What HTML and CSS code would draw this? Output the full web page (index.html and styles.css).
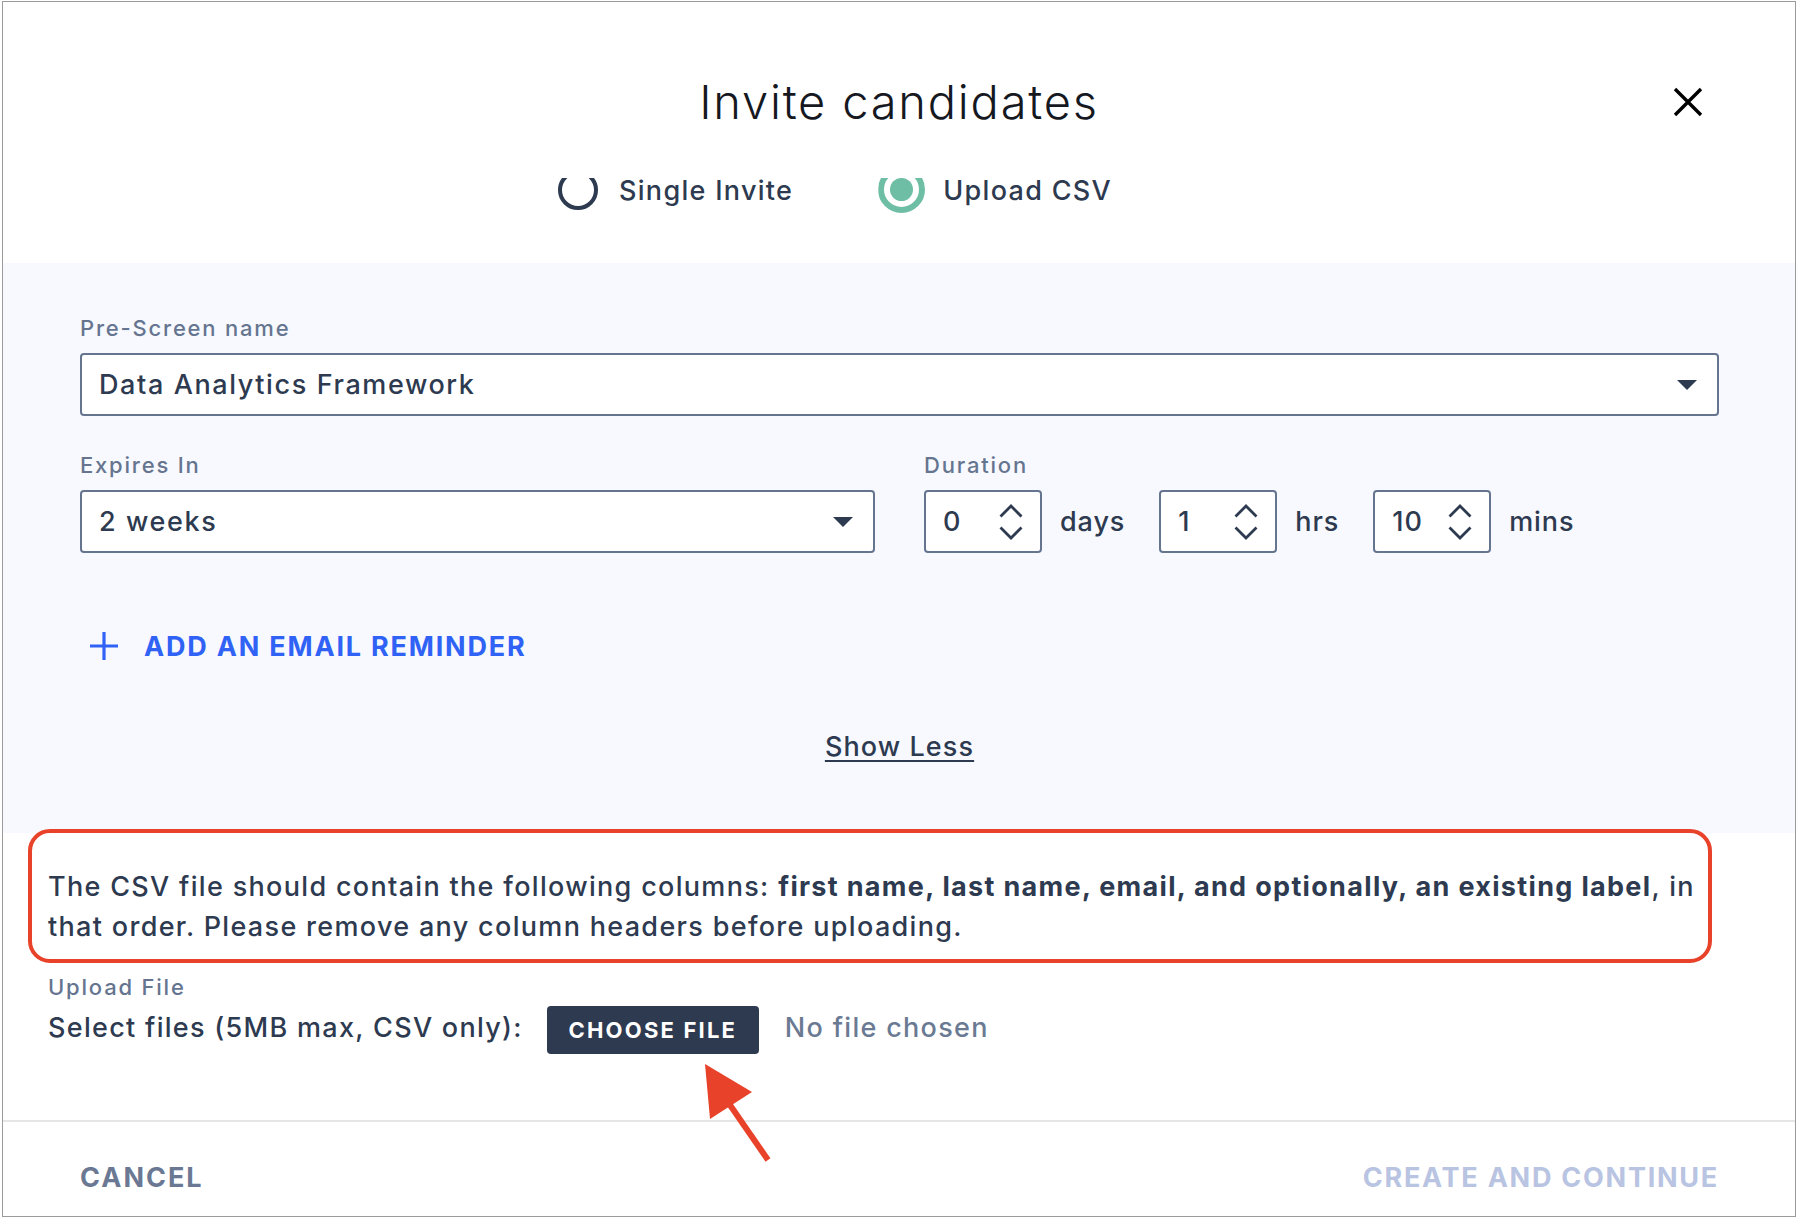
FILE: index.html
```html
<!DOCTYPE html>
<html lang="en">
<head>
<meta charset="utf-8">
<title>Invite candidates</title>
<link rel="stylesheet" href="styles.css">
</head>
<body>
<div class="dialog">
  <header class="head">
    <div class="title-row">
      <h1 class="title">Invite candidates</h1>
      <button class="close" aria-label="Close">
        <svg width="30" height="30" viewBox="0 0 30 30"><path d="M2 2 L28 28 M28 2 L2 28" stroke="#000" stroke-width="3.4" fill="none"/></svg>
      </button>
    </div>
    <div class="modes">
      <label class="radio">
        <span class="ring"></span>
        <span class="radio-text">Single Invite</span>
      </label>
      <label class="radio radio-on">
        <span class="ring ring-on"><span class="dot"></span></span>
        <span class="radio-text">Upload CSV</span>
      </label>
    </div>
  </header>

  <section class="panel">
    <div class="field">
      <div class="label">Pre-Screen name</div>
      <div class="select">
        <span>Data Analytics Framework</span>
        <svg class="caret" width="20" height="10" viewBox="0 0 20 10"><path d="M0 0 H20 L10 10 Z" fill="#2d3a50"/></svg>
      </div>
    </div>

    <div class="row2">
      <div class="field expires">
        <div class="label">Expires In</div>
        <div class="select">
          <span>2 weeks</span>
          <svg class="caret" width="20" height="10" viewBox="0 0 20 10"><path d="M0 0 H20 L10 10 Z" fill="#2d3a50"/></svg>
        </div>
      </div>
      <div class="field duration">
        <div class="label">Duration</div>
        <div class="dur-inputs">
          <div class="num"><span>0</span>
            <svg class="spin" width="24" height="36" viewBox="0 0 24 36"><path d="M1.5 12.5 L12 2 L22.5 12.5 M1.5 23.5 L12 34 L22.5 23.5" stroke="#2d3a50" stroke-width="2.8" fill="none"/></svg>
          </div>
          <span class="unit">days</span>
          <div class="num"><span>1</span>
            <svg class="spin" width="24" height="36" viewBox="0 0 24 36"><path d="M1.5 12.5 L12 2 L22.5 12.5 M1.5 23.5 L12 34 L22.5 23.5" stroke="#2d3a50" stroke-width="2.8" fill="none"/></svg>
          </div>
          <span class="unit">hrs</span>
          <div class="num"><span>10</span>
            <svg class="spin" width="24" height="36" viewBox="0 0 24 36"><path d="M1.5 12.5 L12 2 L22.5 12.5 M1.5 23.5 L12 34 L22.5 23.5" stroke="#2d3a50" stroke-width="2.8" fill="none"/></svg>
          </div>
          <span class="unit">mins</span>
        </div>
      </div>
    </div>

    <div class="add-reminder">
      <svg width="28" height="28" viewBox="0 0 28 28"><path d="M14 0 V28 M0 14 H28" stroke="#2f62f5" stroke-width="3.2" fill="none"/></svg>
      <span>ADD AN EMAIL REMINDER</span>
    </div>

    <div class="show-less"><a href="#">Show Less</a></div>
  </section>

  <section class="upload">
    <p class="note">The CSV file should contain the following columns: <b>first name, last name, email, and optionally, an existing label</b>, in that order. Please remove any column headers before uploading.</p>
    <div class="label upload-label">Upload File</div>
    <div class="file-row">
      <span class="file-text">Select files (5MB max, CSV only):</span>
      <span class="btn">CHOOSE FILE</span>
      <span class="file-text nofile">No file chosen</span>
    </div>
    <div class="annot-box"></div>
    <svg class="annot-arrow" width="90" height="115" viewBox="0 0 90 115">
      <path d="M15 11 L62 39 L20 66 Z" fill="#e8432a"/>
      <path d="M40 52 L78 107" stroke="#e8432a" stroke-width="6" fill="none"/>
    </svg>
  </section>

  <footer class="foot">
    <span class="cancel">CANCEL</span>
    <span class="create">CREATE AND CONTINUE</span>
  </footer>
</div>
</body>
</html>
```

FILE: styles.css
```css
* { box-sizing: border-box; }
html, body { margin: 0; padding: 0; background: #fff; }
body { font-family: Inter, "Noto Sans", sans-serif; color: #2d3a50; }

.dialog {
  margin: 1px 0 0 2px;
  width: 1794px;
  height: 1216px;
  border: 1px solid #9b9b9b;
  display: flex;
  flex-direction: column;
  background: #fff;
  position: relative;
  overflow: hidden;
}

/* header */
.head { height: 261px; flex: none; padding-top: 72px; }
.title-row {
  display: grid;
  grid-template-columns: 1fr auto 1fr;
  align-items: center;
  height: 56px;
}
.title {
  grid-column: 2;
  margin: 0;
  font-size: 47px;
  font-weight: 300;
  line-height: 56px;
  letter-spacing: 1.8px;
  color: #15181f;
}
.close {
  grid-column: 3;
  justify-self: end;
  margin-right: 92px;
  width: 30px;
  height: 30px;
  padding: 0;
  border: 0;
  background: none;
  display: flex;
}
.modes {
  display: flex;
  align-items: flex-start;
  height: 44px;
  margin-top: 48px;
  padding-left: 555px;
}
.radio {
  display: flex;
  align-items: flex-start;
  font-size: 27px;
  font-weight: 500;
  line-height: 40px;
  letter-spacing: 1.3px;
}
.radio-text { margin-top: -7px; }
.radio-on { margin-left: 85px; }
.ring {
  width: 40px;
  height: 40px;
  border: 4px solid #2d3a50;
  border-radius: 50%;
  margin-top: -8px;
  margin-right: 21px;
  flex: none;
  clip-path: inset(8px 0 0 0);
}
.ring-on {
  width: 47px;
  height: 47px;
  border: 6px solid #6dbea4;
  margin-top: -12px;
  margin-right: 18px;
  display: flex;
  align-items: center;
  justify-content: center;
  clip-path: inset(12px 0 0 0);
}
.dot { width: 23px; height: 23px; border-radius: 50%; background: #6dbea4; flex: none; }

/* panel */
.panel {
  flex: none;
  background: #f7f9fe;
  padding: 52px 76px 66px 77px;
}
.label {
  font-size: 22px;
  line-height: 26px;
  font-weight: 500;
  letter-spacing: 1.8px;
  color: #66758f;
  margin-bottom: 12px;
}
.select {
  height: 63px;
  border: 2px solid #66758f;
  border-radius: 4px;
  background: #fff;
  display: flex;
  align-items: center;
  justify-content: space-between;
  padding: 0 20px 0 17px;
  font-size: 27px;
  font-weight: 500;
  letter-spacing: 1.6px;
}
.row2 { display: flex; margin-top: 36px; }
.expires { width: 795px; flex: none; }
.duration { margin-left: 49px; }
.dur-inputs { display: flex; align-items: center; }
.num {
  width: 118px;
  height: 63px;
  border: 2px solid #66758f;
  border-radius: 4px;
  background: #fff;
  display: flex;
  align-items: center;
  justify-content: space-between;
  padding: 0 17px;
  font-size: 27px;
  font-weight: 500;
  letter-spacing: 1px;
}
.unit { margin: 0 34px 0 18px; font-size: 27px; font-weight: 500; letter-spacing: 0.9px; }
.add-reminder {
  display: flex;
  align-items: center;
  gap: 26px;
  height: 40px;
  margin-top: 73px;
  padding-left: 10px;
  color: #2f62f5;
  font-size: 27px;
  font-weight: 700;
  letter-spacing: 1.8px;
}
.show-less {
  margin-top: 61px;
  text-align: center;
  line-height: 40px;
  font-size: 27px;
  font-weight: 500;
  letter-spacing: 1.1px;
}
.show-less a {
  color: #2d3a50;
  text-decoration: underline;
  text-decoration-thickness: 2px;
  text-underline-offset: 4px;
}

/* upload */
.upload {
  flex: none;
  position: relative;
  padding: 34px 48px 66px 45px;
}
.note {
  margin: 0;
  padding-right: 32px;
  font-size: 27px;
  line-height: 40px;
  font-weight: 500;
  letter-spacing: 1.32px;
}
.note b { font-weight: 700; }
.upload-label { margin: 27px 0 0; }
.file-row {
  display: flex;
  align-items: center;
  height: 48px;
  margin-top: 6px;
  font-size: 27px;
  font-weight: 500;
}
.file-text { letter-spacing: 1.3px; padding-bottom: 6px; }
.btn {
  width: 212px;
  height: 48px;
  margin: 0 26px 0 24px;
  background: #2e3a50;
  color: #fff;
  border-radius: 4px;
  display: flex;
  align-items: center;
  justify-content: center;
  font-size: 22px;
  font-weight: 700;
  letter-spacing: 2.2px;
}
.nofile { color: #6b7a93; }
.annot-box {
  position: absolute;
  left: 25px;
  top: -4px;
  width: 1684px;
  height: 134px;
  border: 4px solid #e8432a;
  border-radius: 22px;
  pointer-events: none;
}
.annot-arrow {
  position: absolute;
  left: 687px;
  top: 220px;
  z-index: 2;
}

/* footer */
.foot {
  flex: 1;
  border-top: 2px solid #e6e6e6;
  padding: 36px 76px 0 77px;
  display: flex;
  justify-content: space-between;
  align-items: flex-start;
  font-size: 27px;
  line-height: 40px;
  font-weight: 700;
}
.cancel { color: #6b7893; letter-spacing: 2px; }
.create { color: #b8c4e2; letter-spacing: 1.75px; }
```
